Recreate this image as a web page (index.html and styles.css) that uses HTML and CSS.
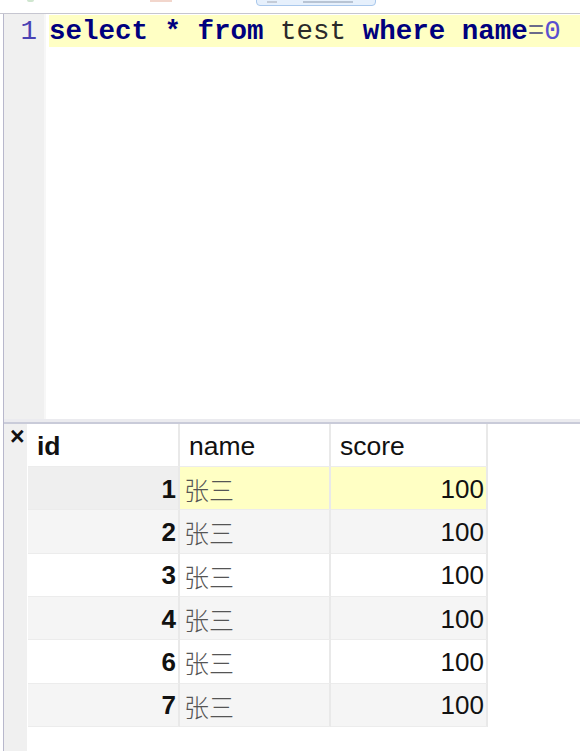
FILE: index.html
```html
<!DOCTYPE html>
<html>
<head>
<meta charset="utf-8">
<link rel="stylesheet" href="styles.css">
</head>
<body>
<div class="toolbar">
  <span class="tb-green"></span>
  <span class="tb-orange"></span>
  <span class="tb-button"><span class="tb-b1"></span><span class="tb-b2"></span></span>
</div>
<div class="frame">
  <div class="editor">
    <div class="gutter"><div class="lnum">1</div></div>
    <div class="gsep"></div>
    <div class="code">
      <div class="line"><span class="kw">select</span> <span class="kw">*</span> <span class="kw">from</span> <span class="id">test</span> <span class="kw">where</span> <span class="kw">name</span><span class="op">=</span><span class="num">0</span></div>
    </div>
  </div>
  <div class="split"></div>
  <div class="results">
    <div class="rgutter"><span class="close">×</span></div>
    <div class="grid">
      <div class="c hd b">id</div><div class="c hd">name</div><div class="c hd">score</div>
      <div class="c n cur">1</div><div class="c t sel">张三</div><div class="c v sel">100</div>
      <div class="c n alt">2</div><div class="c t alt">张三</div><div class="c v alt">100</div>
      <div class="c n">3</div><div class="c t">张三</div><div class="c v">100</div>
      <div class="c n alt">4</div><div class="c t alt">张三</div><div class="c v alt">100</div>
      <div class="c n">6</div><div class="c t">张三</div><div class="c v">100</div>
      <div class="c n alt">7</div><div class="c t alt">张三</div><div class="c v alt">100</div>
    </div>
  </div>
</div>
</body>
</html>
```
FILE: styles.css
```css
html, body { margin: 0; padding: 0; background: #ffffff; }
body { width: 580px; height: 751px; overflow: hidden; }

.toolbar { height: 13px; border-bottom: 1px solid #c6c6d0; position: relative; background: #fff; }
.tb-green { position: absolute; left: 27px; top: 0; width: 7px; height: 2px; background: #cfe6cf; border-radius: 0 0 4px 4px; }
.tb-orange { position: absolute; left: 150px; top: 0; width: 22px; height: 2px; background: #f2d6cc; }
.tb-button { position: absolute; left: 256px; top: -4px; width: 118px; height: 8px; border: 1px solid #a9c8ec; border-radius: 4px; background: #e6f0fc; }
.tb-b1 { position: absolute; left: 10px; top: 4px; width: 10px; height: 2px; background: #c4ccd8; }
.tb-b2 { position: absolute; left: 46px; top: 4px; width: 50px; height: 2px; background: #b8c4d4; }

.frame { margin-left: 3px; border-left: 1px solid #b8b8cc; height: 737px; display: flex; flex-direction: column; }

.editor { height: 405px; display: flex; }
.gutter { width: 40px; background: #f0f0f0; }
.gsep { width: 2px; background: #f7f7f7; }
.lnum { font-family: "Liberation Mono", monospace; font-size: 27.5px; color: #4a42b4; text-align: right; padding-right: 7px; height: 32px; line-height: 32px; margin-top: 2px; }
.code { flex: 1; padding-left: 3px; padding-top: 1px; }
.line { font-family: "Liberation Mono", monospace; font-size: 27.5px; height: 32px; line-height: 34px; background: #ffffc4; white-space: pre; color: #222; }
.kw { color: #00007e; font-weight: bold; }
.id { color: #2a2a2a; }
.op { color: #6a6a8a; }
.num { color: #5a4fd0; }

.split { height: 3px; background: #ebebef; border-bottom: 2px solid #c9cbd9; }

.results { flex: 1; display: flex; }
.rgutter { width: 23px; background: #f0f0f0; position: relative; }
.close { position: absolute; left: 6px; top: 2px; font-family: "Liberation Sans", sans-serif; font-size: 25px; font-weight: bold; line-height: 20px; color: #111; }

.grid { display: grid; grid-template-columns: 152px 151px 157px; grid-template-rows: 43px repeat(6, 43.33px); align-self: flex-start; margin-left: 1px; }
.c { box-sizing: border-box; border-right: 2px solid #e9e9e9; border-bottom: 1px solid #ececec; display: flex; align-items: center; font-family: "Liberation Sans", Arial, sans-serif; font-size: 26px; color: #111; background: #fff; padding-top: 2px; }
.hd { padding-left: 9px; font-size: 26.5px; }
.b { font-weight: bold; }
.n { justify-content: flex-end; padding-right: 2px; font-weight: bold; }
.v { justify-content: flex-end; padding-right: 2px; }
.t { padding-left: 4px; font-family: "Noto Sans CJK SC", sans-serif; font-weight: 300; color: #555; font-size: 25px; }
.alt { background: #f5f5f5; }
.cur { background: #efefef; }
.sel { background: #ffffc4; }
```
